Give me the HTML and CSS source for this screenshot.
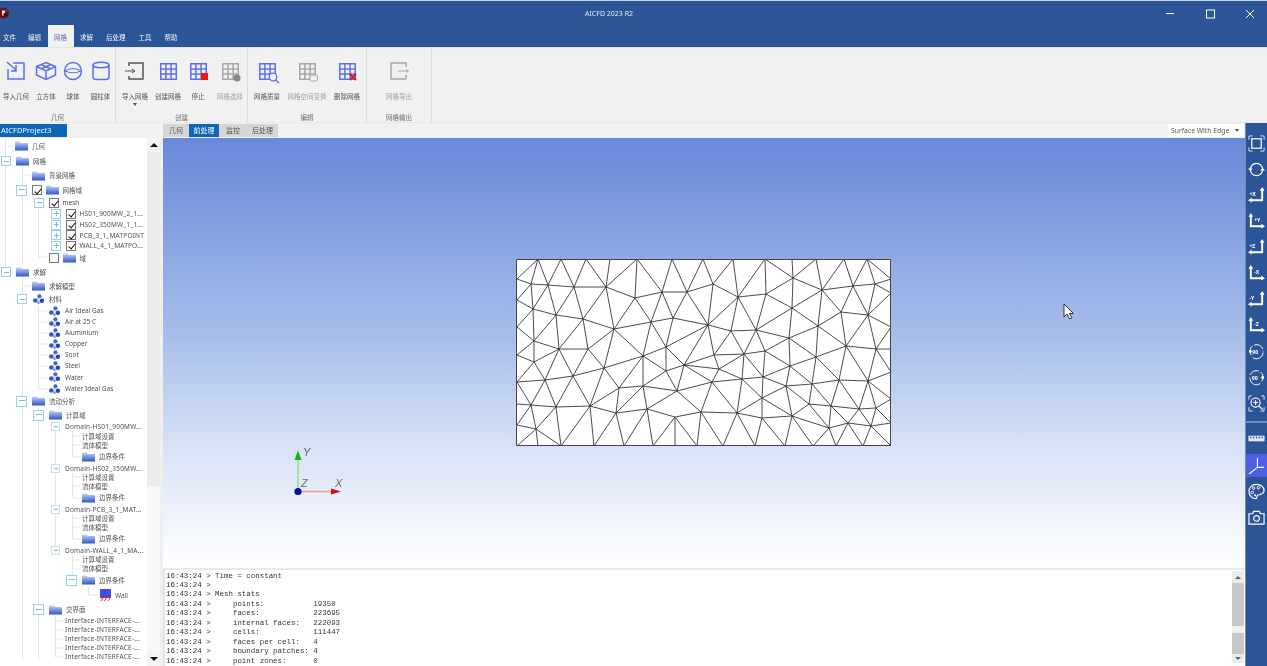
FILE: index.html
```html
<!DOCTYPE html>
<html lang="zh-CN">
<head>
<meta charset="utf-8">
<title>AICFD 2023 R2</title>
<link rel="stylesheet" href="styles.css">
</head>
<body>
<svg class="defs" width="0" height="0" aria-hidden="true">
  <defs>
    <linearGradient id="fg" x1="0" y1="0" x2="0" y2="1">
      <stop offset="0" stop-color="#c9d6f2"/><stop offset=".45" stop-color="#7f9be0"/><stop offset="1" stop-color="#2f56c4"/>
    </linearGradient>
    <symbol id="folder" viewBox="0 0 13 10"><path d="M0 1.5Q0 .5 1 .5H4.500L6 2H12Q13 2 13 3V9.500H0Z" fill="url(#fg)"/></symbol>
    <symbol id="mat" viewBox="0 0 13 11">
      <circle cx="7.500" cy="2.500" r="2.300" fill="#3f63d8"/><circle cx="3" cy="7.200" r="2.500" fill="#3656d0"/><circle cx="10.200" cy="7.500" r="2.500" fill="#2746b8"/><circle cx="6.500" cy="5.500" r="1.400" fill="#c4d0f0"/><circle cx="6.500" cy="9.500" r="1.400" fill="#6f8ae0"/>
    </symbol>
    <symbol id="wall" viewBox="0 0 11 12"><rect width="11" height="8" fill="#3d4fe0"/><rect y="8" width="11" height="1" fill="#e02020"/><path d="M1 12l2-3M4.500 12l2-3M8 12l2-3" stroke="#e02020" fill="none"/></symbol>
    <symbol id="grid" viewBox="0 0 17 17"><path d="M.75.75H16.250V16.250H.75ZM.75 5.900H16.250M.75 11.100H16.250M5.900.75V16.250M11.100.75V16.250" fill="none" stroke="currentColor" stroke-width="1.500"/></symbol>
    <symbol id="axa" viewBox="0 0 18 18"><path d="M15 3V14H3" fill="none" stroke="#fff" stroke-width="2"/><path d="M15 0l2.500 4h-5zM0 14l4-2.500v5z" fill="#fff"/></symbol>
    <symbol id="axb" viewBox="0 0 18 18"><path d="M3 3V14H15" fill="none" stroke="#fff" stroke-width="2"/><path d="M3 0l2.500 4h-5zM18 14l-4-2.500v5z" fill="#fff"/></symbol>
  </defs>
</svg>
<div class="app">
  <header class="titlebar">
    <svg class="logo" viewBox="0 0 10 12"><circle cx="3.500" cy="6" r="5.500" fill="#6a1216"/><path d="M2 3.500h3v2.500H3.500v2.500H2z" fill="#e8e8e8"/><circle cx="6" cy="8" r="1.400" fill="#111"/><circle cx="6.500" cy="3.500" r="1" fill="#d02020"/></svg>
    <div class="title">AICFD 2023 R2</div>
    <div class="winctl">
      <svg viewBox="0 0 40 25"><path d="M16 12.500H24" stroke="#fff" fill="none"/></svg>
      <svg viewBox="0 0 40 25"><rect x="16.500" y="9" width="8" height="8" stroke="#fff" fill="none"/></svg>
      <svg viewBox="0 0 40 25"><path d="M16 9l8 8M24 9l-8 8" stroke="#fff" fill="none"/></svg>
    </div>
  </header>
  <nav class="menubar">
    <span class="menu first">文件</span><span class="menu">编辑</span><span class="menu active">网格</span><span class="menu">求解</span><span class="menu">后处理</span><span class="menu">工具</span><span class="menu">帮助</span>
  </nav>
  <section class="ribbon">
    <div class="group g1">
      <div class="btns">
        <div class="btn w32"><svg class="ri v20 blue" viewBox="0 0 20 20"><path d="M7 2H18V18H2V8" fill="none" stroke="currentColor" stroke-width="1.500"/><path d="M1 1L10 9M10 4V10H5" fill="none" stroke="currentColor" stroke-width="1.500"/></svg><span>导入几何</span></div>
        <div class="btn w28"><svg class="ri v20 big blue" viewBox="0 0 22 20"><path d="M11 1.500L20.500 5.500V14L11 18.500L1.500 14V5.500ZM1.500 5.500L11 10L20.500 5.500M11 10V18.500M6 3.500L16 8M16 3.500L6 8" fill="none" stroke="currentColor" stroke-width="1.500"/></svg><span>立方体</span></div>
        <div class="btn w26"><svg class="ri v20 blue" viewBox="0 0 20 20"><circle cx="10" cy="10" r="8.500" fill="none" stroke="currentColor" stroke-width="1.500"/><path d="M2 10Q10 5 18 10M2 10Q10 13.500 18 10" fill="none" stroke="currentColor"/></svg><span>球体</span></div>
        <div class="btn w29"><svg class="ri v20 blue" viewBox="0 0 20 20"><ellipse cx="10" cy="4" rx="8" ry="2.800" fill="none" stroke="currentColor" stroke-width="1.500"/><path d="M2 4V16Q2 18.500 6 18.500H14Q18 18.500 18 16V4" fill="none" stroke="currentColor" stroke-width="1.500"/></svg><span>圆柱体</span></div>
      </div>
      <div class="glabel">几何</div>
    </div>
    <div class="group g2">
      <div class="btns">
        <div class="btn w38"><svg class="ri v20 dark" viewBox="0 0 20 20"><path d="M4 5V2H18V18H4V15" fill="none" stroke="currentColor" stroke-width="1.500"/><path d="M0 10H9M7 8l3 2-3 2" fill="none" stroke="currentColor"/></svg><span>导入网格</span><i class="caret"></i></div>
        <div class="btn w28"><svg class="ri blue"><use href="#grid"/></svg><span>创建网格</span></div>
        <div class="btn w32"><svg class="ri blue"><use href="#grid"/></svg><b class="stop"></b><span>停止</span></div>
        <div class="btn w32 off"><svg class="ri gv grey" viewBox="0 0 20 20"><use href="#grid" width="17" height="17"/><circle cx="15" cy="15" r="3.500" fill="#888"/></svg><span>网格选择</span></div>
      </div>
      <div class="glabel">创建</div>
    </div>
    <div class="group g3">
      <div class="btns">
        <div class="btn w38"><svg class="ri gv blue" viewBox="0 0 20 20"><use href="#grid" width="17" height="17"/><circle cx="14" cy="14" r="3.800" fill="#f1f1f1" stroke="currentColor" stroke-width="1.300"/><path d="M16.500 16.500L20 20" stroke="currentColor" stroke-width="1.300"/></svg><span>网格质量</span></div>
        <div class="btn w42 off"><svg class="ri gv grey" viewBox="0 0 20 20"><use href="#grid" width="17" height="17"/><rect x="11" y="12" width="7.500" height="6" rx="1.500" fill="#f1f1f1" stroke="currentColor"/></svg><span>网格空间变换</span></div>
        <div class="btn w38"><svg class="ri blue"><use href="#grid"/></svg><svg class="redx" viewBox="0 0 8 8"><path d="M1 1L7 7M7 1L1 7" stroke="#e01515" stroke-width="2"/></svg><span>删除网格</span></div>
      </div>
      <div class="glabel">编辑</div>
    </div>
    <div class="group g4">
      <div class="btns">
        <div class="btn w64 off"><svg class="ri v20 grey" viewBox="0 0 20 20"><path d="M17 6V2H2V18H17V14" fill="none" stroke="currentColor" stroke-width="1.500"/><path d="M9 10H19M17 8.500l2.500 1.500-2.500 1.500" fill="none" stroke="currentColor"/></svg><span>网格导出</span></div>
      </div>
      <div class="glabel">网格输出</div>
    </div>
  </section>
  <main class="workspace">
    <aside class="leftcol">
      <div class="projtab">AICFDProject3</div>
      <div class="treepane">
        <div class="tree">
          <svg class="treelines" viewBox="0 138 147 528"><path d="M5.500 138V272M5.500 146H14M22.500 166V660M22.500 175H31M22.500 286H31M38.500 197V257M38.500 257H48M38.500 305V389M38.500 311H48M38.500 322H48M38.500 333H48M38.500 344H48M38.500 355H48M38.500 366H48M38.500 378H48M38.500 389H48M55.500 208V245M38.500 408V660M55.500 422V550M55.500 621H63M55.500 630H63M55.500 639H63M55.500 648H63M55.500 657H63M55.500 616V657M72.500 431V457M72.500 436H80M72.500 445H80M72.500 457H81M72.500 473V498M72.500 477H80M72.500 486H80M72.500 498H81M72.500 514V539M72.500 518H80M72.500 527H80M72.500 539H81M72.500 555V580M72.500 560H80M72.500 569H80M88.500 587V595H98" fill="none" stroke="#e6e6e6"/></svg>
          <div class="row h16 p15"><svg class="fd"><use href="#folder"/></svg><span>几何</span></div>
          <div class="row h14 p1"><i class="ex"></i><svg class="fd"><use href="#folder"/></svg><span>网格</span></div>
          <div class="row h15 p32"><svg class="fd"><use href="#folder"/></svg><span>背景网格</span></div>
          <div class="row h14 p16"><i class="ex lg"></i><i class="cb on"></i><svg class="fd"><use href="#folder"/></svg><span>网格域</span></div>
          <div class="row h11 p34"><i class="ex"></i><i class="cb on"></i><span>mesh</span></div>
          <div class="row h11 p51"><i class="ex plus"></i><i class="cb on"></i><span>HS01_900MW_2_1...</span></div>
          <div class="row h11 p51"><i class="ex plus"></i><i class="cb on"></i><span>HS02_350MW_1_1...</span></div>
          <div class="row h10 p51"><i class="ex plus"></i><i class="cb on"></i><span>PCB_3_1_MATPOINT</span></div>
          <div class="row h11 p51"><i class="ex plus"></i><i class="cb on"></i><span>WALL_4_1_MATPO...</span></div>
          <div class="row h14 p49"><i class="cb"></i><svg class="fd"><use href="#folder"/></svg><span>域</span></div>
          <div class="row h14 p1"><i class="ex"></i><svg class="fd"><use href="#folder"/></svg><span>求解</span></div>
          <div class="row h14 p32"><svg class="fd"><use href="#folder"/></svg><span>求解模型</span></div>
          <div class="row h12 p17"><i class="ex"></i><svg class="fd"><use href="#mat"/></svg><span>材料</span></div>
          <div class="row h11 p48"><svg class="fd"><use href="#mat"/></svg><span>Air Ideal Gas</span></div>
          <div class="row h11 p48"><svg class="fd"><use href="#mat"/></svg><span>Air at 25 C</span></div>
          <div class="row h11 p48"><svg class="fd"><use href="#mat"/></svg><span>Aluminium</span></div>
          <div class="row h11 p48"><svg class="fd"><use href="#mat"/></svg><span>Copper</span></div>
          <div class="row h11 p48"><svg class="fd"><use href="#mat"/></svg><span>Soot</span></div>
          <div class="row h11 p48"><svg class="fd"><use href="#mat"/></svg><span>Steel</span></div>
          <div class="row h12 p48"><svg class="fd"><use href="#mat"/></svg><span>Water</span></div>
          <div class="row h11 p48"><svg class="fd"><use href="#mat"/></svg><span>Water Ideal Gas</span></div>
          <div class="row h14 p16"><i class="ex lg"></i><svg class="fd"><use href="#folder"/></svg><span>流动分析</span></div>
          <div class="row h14 p33"><i class="ex lg"></i><svg class="fd"><use href="#folder"/></svg><span>计算域</span></div>
          <div class="row h9 p51"><i class="ex sm"></i><span>Domain-HS01_900MW...</span></div>
          <div class="row h10 p82"><span>计算域设置</span></div>
          <div class="row h9 p82"><span>流体模型</span></div>
          <div class="row h13 p82"><svg class="fd"><use href="#folder"/></svg><span>边界条件</span></div>
          <div class="row h10 p51"><i class="ex sm"></i><span>Domain-HS02_350MW...</span></div>
          <div class="row h9 p82"><span>计算域设置</span></div>
          <div class="row h9 p82"><span>流体模型</span></div>
          <div class="row h13 p82"><svg class="fd"><use href="#folder"/></svg><span>边界条件</span></div>
          <div class="row h10 p51"><i class="ex sm"></i><span>Domain-PCB_3_1_MAT...</span></div>
          <div class="row h9 p82"><span>计算域设置</span></div>
          <div class="row h9 p82"><span>流体模型</span></div>
          <div class="row h13 p82"><svg class="fd"><use href="#folder"/></svg><span>边界条件</span></div>
          <div class="row h10 p51"><i class="ex sm"></i><span>Domain-WALL_4_1_MA...</span></div>
          <div class="row h9 p82"><span>计算域设置</span></div>
          <div class="row h9 p82"><span>流体模型</span></div>
          <div class="row h14 p66"><i class="ex lg"></i><svg class="fd"><use href="#folder"/></svg><span>边界条件</span></div>
          <div class="row h16 p100"><svg class="wl"><use href="#wall"/></svg><span>Wall</span></div>
          <div class="row h13 p33"><i class="ex lg"></i><svg class="fd"><use href="#folder"/></svg><span>交界面</span></div>
          <div class="row h9 p65"><span>Interface-INTERFACE-...</span></div>
          <div class="row h9 p65"><span>Interface-INTERFACE-...</span></div>
          <div class="row h9 p65"><span>Interface-INTERFACE-...</span></div>
          <div class="row h9 p65"><span>Interface-INTERFACE-...</span></div>
          <div class="row h9 p65"><span>Interface-INTERFACE-...</span></div>
        </div>
        <div class="tscroll">
          <div class="tbtn"><i class="up"></i></div>
          <div class="tthumb"></div>
          <div class="ttrack"></div>
          <div class="tbtn"><i class="down"></i></div>
        </div>
      </div>
    </aside>
    <div class="centercol">
      <div class="tabrow">
        <span class="tab t26">几何</span><span class="tab t30 sel">前处理</span><span class="tab t28">监控</span><span class="tab t31">后处理</span>
        <div class="combo"><span>Surface With Edge</span><i class="cdown"></i></div>
      </div>
      <div class="viewport">
        <svg class="mesh" viewBox="516 259 375 187" width="375" height="187">
          <rect x="516" y="259" width="375" height="187" fill="#fff"/>
          <path class="edges" d="M517 279L531 284L548 285L574 287L606 287L635 298L662 292L687 292L713 284L738 297L766 294L792 308L822 290L853 286L875 284L891 279
          M517 279L538 259L531 284M538 259L548 285L561 259L574 287L586 259L606 287L610 259M606 287L637 259L635 298M637 259L662 292L672 259L687 292L703 259L713 284L733 259L738 297L765 259L766 294M765 259L793 278L792 259M793 278L792 308M793 278L816 259L822 290L844 259L853 286L867 259L875 284M867 259L891 279M793 278L822 290M766 294L793 278
          M517 300L533 309L556 315L583 319L614 329L651 322L673 318L708 325L731 331L756 330L789 338L818 326L841 312L868 315L891 327
          M517 300L531 284L533 309L548 285L556 315L574 287L583 319L606 287L614 329L635 298L651 322L662 292L673 318L687 292L708 325L713 284M708 325L738 297L731 331M738 297L756 330L766 294M756 330L792 308L789 338M792 308L818 326L822 290L841 312L853 286L868 315L875 284L891 293L868 315
          M517 327L533 309L534 341L556 315L559 349L583 319L588 349L614 329L604 368M614 329L643 356L651 322L666 347L673 318M517 327L534 341M517 355L534 341L534 362L517 355M534 341L559 349L534 362L517 382L545 380L534 362M545 380L559 349L573 376L545 380M559 349L588 349L573 376L604 368L588 349M604 368L643 356L666 347L708 325M643 356L666 371L666 347L684 365L708 325L714 355L731 331L744 354L756 330L765 351L789 338L790 366L816 357L818 326M789 338L816 357L846 346L818 326M846 346L841 312M846 346L868 315L876 349L846 346M876 349L891 327M876 349L891 349M846 346L839 380L816 357M846 346L868 381L876 349L891 372L868 381L839 380L812 384L786 386L763 377L790 366L765 351L744 354L714 355L684 365L666 371L677 391L684 365M714 355L719 369L684 365M719 369L744 354L742 379L719 369L712 382L742 379L763 377L744 354M763 377L765 351M790 366L786 386M816 357L812 384M684 365L712 382L677 391M790 366L812 384
          M517 382L531 405L545 380L556 407L573 376L590 406L604 368L619 388L590 406L556 407L536 429L531 405L517 404M531 405L517 425L536 429M517 446L536 429L538 446M536 429L561 446L556 407M561 446L590 406L594 446L616 413L590 406M643 356L643 386L619 388L616 413L643 386L647 409L616 413L624 446L647 409L653 446L675 417L647 409L677 391L643 386M675 417L675 446M675 417L701 412L677 391M701 412L697 446M701 412L723 446L737 413L712 382L701 412M701 412L737 413L755 446L762 418L737 413L762 398L762 418L792 416L762 398L786 386L809 404L812 384M809 404L792 416L785 446M792 416L813 446M792 416L829 428L809 404L831 406L829 428L848 423L831 406L839 380M831 406L859 409L848 423L871 426L859 409L868 381M859 409L876 408L868 381L891 399L876 408L871 426L891 423L876 408M829 428L813 446M829 428L836 446L848 423L863 446L871 426L891 446M762 398L763 377M762 398L742 379L737 413
          M531 405L556 407M619 388L643 356M643 386L666 371M786 386L792 416M812 384L831 406M839 380L859 409M762 418L785 446M675 417L697 446"/>
          <rect class="edges" x="516.500" y="259.500" width="374" height="186"/>
        </svg>
        <svg class="axes" viewBox="0 0 60 60">
          <path d="M8 45.500V12" stroke="#8fe08f" stroke-width="1.500"/><path d="M8 4.500L11.500 14H4.500Z" fill="#12b512"/>
          <path d="M8 45.500H42" stroke="#f2a0a0" stroke-width="1.500"/><path d="M51 45.500L41 42.500V48.500Z" fill="#d00f0f"/>
          <circle cx="8" cy="45.500" r="3.600" fill="#0a0a9c"/>
          <text x="13" y="10" class="axlabel">Y</text><text x="11" y="41" class="axlabel">Z</text><text x="45" y="41" class="axlabel">X</text>
        </svg>
        <svg class="cursor" viewBox="0 0 11 17"><path d="M1 1V14L4 11L6.500 16L9 15L6.500 10.500H10.500Z" fill="#fff" stroke="#333"/></svg>
      </div>
      <div class="console">
        <pre class="log">16:43:24 &gt; Time = constant
16:43:24 &gt; 
16:43:24 &gt; Mesh stats
16:43:24 &gt;     points:           19350
16:43:24 &gt;     faces:            223695
16:43:24 &gt;     internal faces:   222093
16:43:24 &gt;     cells:            111447
16:43:24 &gt;     faces per cell:   4
16:43:24 &gt;     boundary patches: 4
16:43:24 &gt;     point zones:      0</pre>
        <div class="cscroll">
          <div class="cbtn"><i class="up sm"></i></div>
          <div class="ctrack"><div class="cthumb"></div></div>
          <div class="cbtn low"><i class="down sm"></i></div>
        </div>
      </div>
    </div>
    <aside class="toolbar">
      <div class="tool"><svg viewBox="0 0 18 18"><rect x="4" y="4" width="10" height="10" fill="none" stroke="#fff" stroke-width="1.300"/><path d="M1 5V1H5M13 1H17V5M17 13V17H13M5 17H1V13" fill="none" stroke="#dfe6f5"/></svg></div>
      <div class="tool"><svg viewBox="0 0 18 18"><circle cx="9" cy="9" r="6.500" fill="none" stroke="#fff" stroke-width="1.300"/><path d="M0 8l2.500 2.500L5 8zM18 10l-2.500-2.500L13 10z" fill="#fff"/></svg></div>
      <div class="tool"><svg viewBox="0 0 18 18"><use href="#axa"/><text x="1.500" y="9.500" class="tl">+X</text></svg></div>
      <div class="tool"><svg viewBox="0 0 18 18"><use href="#axb"/><text x="6.500" y="9.500" class="tl">+Y</text></svg></div>
      <div class="tool"><svg viewBox="0 0 18 18"><use href="#axa"/><text x="1.500" y="9.500" class="tl">+Z</text></svg></div>
      <div class="tool"><svg viewBox="0 0 18 18"><use href="#axb"/><text x="6.500" y="9.500" class="tl">-X</text></svg></div>
      <div class="tool"><svg viewBox="0 0 18 18"><use href="#axa"/><text x="1.500" y="9.500" class="tl">-Y</text></svg></div>
      <div class="tool"><svg viewBox="0 0 18 18"><use href="#axb"/><text x="6.500" y="9.500" class="tl">-Z</text></svg></div>
      <div class="tool"><svg viewBox="0 0 18 18"><path d="M3.500 13A7 7 0 1 1 16 9" fill="none" stroke="#fff" stroke-dasharray="11 2"/><path d="M5 15.500A7 7 0 0 0 16 10" fill="none" stroke="#fff"/><circle cx="2.500" cy="9" r="1.500" fill="#fff"/><text x="4.500" y="11.500" class="tl">90</text></svg></div>
      <div class="tool"><svg viewBox="0 0 18 18"><path d="M14.500 13A7 7 0 1 0 2 9" fill="none" stroke="#fff" stroke-dasharray="11 2"/><path d="M13 15.500A7 7 0 0 1 2 10" fill="none" stroke="#fff"/><circle cx="15.500" cy="9" r="1.500" fill="#fff"/><text x="4" y="11.500" class="tl">90</text></svg></div>
      <div class="tool"><svg viewBox="0 0 18 18"><path d="M1 5V1H4M14 1H17V5M17 13V17H13M5 17H1V13" fill="none" stroke="#dfe6f5"/><circle cx="8" cy="8" r="4.800" fill="none" stroke="#fff" stroke-width="1.200"/><path d="M8 5.500V10.500M5.500 8H10.500M11.500 11.500L15.500 15.500" stroke="#fff" stroke-width="1.200"/></svg></div>
      <div class="toolsep"></div>
      <div class="tool"><svg viewBox="0 0 18 18"><rect x=".5" y="6" width="17" height="6" fill="#dfe6f5"/><path d="M3 9V7M6 9V7M9 9V7M12 9V7M15 9V7" stroke="#2b5597" stroke-width="1.200"/></svg></div>
      <div class="tool active"><svg viewBox="0 0 18 18"><path d="M10 1V11M10 11L17 11M10 11L1 18" fill="none" stroke="#fff" stroke-width="1.200"/></svg></div>
      <div class="tool"><svg viewBox="0 0 18 18"><path d="M9 1.500C4 1.500 1 5 1 9C1 14 5 16.500 8 16.500C10 16.500 9 14 10 13C11 12 17 13 17 8C17 4 13 1.500 9 1.500Z" fill="none" stroke="#fff" stroke-width="1.200"/><circle cx="6" cy="5.500" r="1.300" fill="none" stroke="#fff"/><circle cx="11" cy="5" r="1.300" fill="none" stroke="#fff"/><circle cx="4.500" cy="10" r="1.300" fill="none" stroke="#fff"/><circle cx="7.500" cy="13" r="1.200" fill="#fff"/></svg></div>
      <div class="tool"><svg viewBox="0 0 18 18"><path d="M1 5H5L6 2.500H12L13 5H17V16H1Z" fill="none" stroke="#fff" stroke-width="1.200"/><circle cx="9" cy="10" r="3" fill="none" stroke="#fff" stroke-width="1.200"/></svg></div>
    </aside>
  </main>
</div>
</body>
</html>
```
FILE: styles.css
```css
* { box-sizing: border-box; }
html, body { margin: 0; height: 100%; overflow: hidden; background: #f1f1f1; }
body { font-family: "Noto Sans CJK SC", "Noto Sans", sans-serif; color: #4a4a4a; }
.defs { position: absolute; }
.app { display: flex; flex-direction: column; width: 1267px; height: 666px; overflow: hidden; filter: blur(.3px); }

.titlebar { display: flex; align-items: center; height: 25px; flex: none; background: #2b5597; border-top: 1px solid #c8d2e2; color: #fff; }
.logo { width: 10px; height: 12px; flex: none; }
.title { flex: 1; padding-left: 58px; text-align: center; font: 7px "Noto Sans", sans-serif; color: #e8edf6; }
.winctl { display: flex; flex: none; width: 117px; }
.winctl svg { width: 40px; height: 25px; flex: none; }

.menubar { display: flex; height: 22px; flex: none; background: #2b5597; }
.menu { padding: 2px 6.5px 0; line-height: 20px; font-size: 6.5px; color: #eef2f9; }
.menu.first { padding-left: 3px; padding-right: 5.5px; }
.menu.active { background: #f1f1f1; color: #5b73b5; }

.ribbon { display: flex; height: 76px; flex: none; background: #f1f1f1; border-top: 1px solid #e6e6e6; border-bottom: 1px solid #e8e8e8; }
.group { display: flex; flex-direction: column; border-right: 1px solid #dcdcdc; }
.g1 { width: 116px; } .g2 { width: 132px; } .g3 { width: 119px; } .g4 { width: 65px; }
.btns { display: flex; height: 65px; }
.btn { position: relative; display: flex; flex-direction: column; align-items: center; flex: none; padding-top: 15px; font-size: 6.5px; line-height: 10px; white-space: nowrap; color: #555; }
.btn span { margin-top: 11px; }
.off { color: #a3a3a3; }
.w26 { width: 26px; } .w28 { width: 28px; } .w29 { width: 29px; } .w32 { width: 32px; } .w38 { width: 38px; } .w42 { width: 42px; } .w64 { width: 64px; }
.ri { width: 17px; height: 17px; flex: none; overflow: visible; }
.v20 { width: 20px; height: 20px; margin: -2px 0 -1px; }
.v20.big { width: 22px; }
.gv { width: 20px; height: 20px; margin: 0 0 -3px 3px; }
.blue { color: #5c70e8; }
.dark { color: #555; }
.grey { color: #a8a8a8; }
.stop { position: absolute; left: 19px; top: 25px; width: 7px; height: 7px; background: #e81a1a; }
.redx { position: absolute; left: 21px; top: 25px; width: 8px; height: 8px; }
.caret { width: 0; height: 0; margin-top: 2px; border: 2.500px solid transparent; border-top: 3px solid #555; border-bottom: 0; }
.glabel { text-align: center; font-size: 6.5px; line-height: 10px; color: #707070; }

.workspace { display: flex; flex: 1; min-height: 0; }
.leftcol { display: flex; flex-direction: column; flex: none; width: 163px; }
.projtab { flex: none; width: 67px; height: 13px; margin-top: 1px; background: #0d66b5; color: #fff; padding-left: 1px; font: 7.5px/12px "Noto Sans", sans-serif; }
.treepane { display: flex; flex: 1; min-height: 0; margin-top: 1px; background: #fff; border-right: 3px solid #efefef; }
.tree { position: relative; flex: none; width: 147px; overflow: hidden; font-family: "Noto Sans", "Noto Sans CJK SC", sans-serif; }
.treelines { position: absolute; left: 0; top: 0; width: 147px; height: 528px; }
.row { position: relative; display: flex; align-items: center; font-size: 6.5px; white-space: nowrap; color: #505050; }
.row span { line-height: 9px; }
.p51 span, .p65 span { letter-spacing: .2px; }
.h9 { height: 9px; } .h10 { height: 10px; } .h11 { height: 11px; } .h12 { height: 12px; } .h13 { height: 13px; } .h14 { height: 14px; } .h15 { height: 15px; } .h16 { height: 16px; }
.p1 { padding-left: 1px; } .p15 { padding-left: 15px; } .p16 { padding-left: 16px; } .p17 { padding-left: 17px; } .p32 { padding-left: 32px; } .p33 { padding-left: 33px; } .p34 { padding-left: 34px; } .p48 { padding-left: 48px; } .p49 { padding-left: 49px; } .p51 { padding-left: 51px; } .p65 { padding-left: 65px; } .p66 { padding-left: 66px; } .p82 { padding-left: 82px; } .p100 { padding-left: 100px; }
.fd { width: 13px; height: 10px; flex: none; margin-right: 4px; }
.wl { width: 11px; height: 12px; flex: none; margin-right: 4px; }
.ex { position: relative; flex: none; width: 10px; height: 10px; margin-right: 5px; background: #fff; border: 1px solid #93d2ee; }
.ex::before { content: ""; position: absolute; left: 1.500px; right: 1.500px; top: 3.500px; height: 1px; background: #7db8dc; }
.ex.lg { width: 11px; height: 11px; border-width: 1.500px; }
.ex.lg::before { top: 3.500px; }
.ex.sm { width: 9px; height: 9px; border-color: #bfe3f5; }
.ex.sm::before { top: 3px; }
.ex.plus::after { content: ""; position: absolute; top: 1.500px; bottom: 1.500px; left: 3.500px; width: 1px; background: #7db8dc; }
.cb { position: relative; flex: none; width: 10px; height: 10px; margin-right: 3.500px; background: #fff; border: 1px solid #777; }
.cb.on::after { content: ""; position: absolute; left: 2.500px; top: .5px; width: 3px; height: 6px; border: solid #111; border-width: 0 1.300px 1.300px 0; transform: rotate(40deg); }
.tscroll { display: flex; flex-direction: column; flex: none; width: 13px; background: #f8f8f8; }
.tbtn { display: flex; align-items: center; justify-content: center; flex: none; height: 14px; background: #f4f4f4; }
.tthumb { flex: none; height: 334px; background: #ececec; }
.ttrack { flex: 1; }
.up { width: 0; height: 0; border: 4px solid transparent; border-bottom: 4px solid #111; border-top: 0; }
.down { width: 0; height: 0; border: 4px solid transparent; border-top: 4px solid #111; border-bottom: 0; }
.up.sm, .down.sm { border-width: 3px; border-color: transparent; }
.up.sm { border-bottom-color: #666; border-top-width: 0; }
.down.sm { border-top-color: #666; border-bottom-width: 0; }

.centercol { display: flex; flex-direction: column; flex: 1; min-width: 0; }
.tabrow { display: flex; flex: none; height: 15px; padding: 1px 0; }
.tab { flex: none; height: 13px; background: #d6d6d6; text-align: center; font-size: 7px; line-height: 13px; color: #555; }
.t26 { width: 26px; } .t30 { width: 30px; } .t28 { width: 28px; } .t31 { width: 31px; }
.tab.sel { background: #0d66b5; color: #fff; }
.combo { display: flex; align-items: center; justify-content: space-between; flex: none; width: 76px; height: 13px; margin-left: auto; margin-right: 1px; padding: 0 5px 0 3px; background: #fff; font: 6.8px "Noto Sans", sans-serif; color: #555; white-space: nowrap; }
.cdown { width: 0; height: 0; border: 2.500px solid transparent; border-top: 3px solid #555; border-bottom: 0; }
.viewport { position: relative; flex: 1; min-height: 0; background: linear-gradient(#6888d9 0%, #a9bfea 47%, #d8e2f6 72%, #fff 100%); }
.mesh { position: absolute; left: 353px; top: 121px; }
.edges { fill: none; stroke: #2a2a2a; stroke-width: .85; stroke-linejoin: round; }
rect.edges { stroke: #444; stroke-width: 1; }
.axes { position: absolute; left: 127px; top: 308px; width: 60px; height: 60px; }
.axlabel { font: italic 11px "Liberation Sans", sans-serif; fill: #666; }
.cursor { position: absolute; left: 900px; top: 165px; width: 11px; height: 17px; }

.console { display: flex; flex: none; height: 98px; background: #fff; border-top: 2px solid #e9e9e9; border-left: 2px solid #e4e4e4; }
.log { flex: 1; margin: 0; padding: 1.500px 0 0 1px; overflow: hidden; font: 7.45px/9.45px "Liberation Mono", monospace; color: #333; white-space: pre; }
.cscroll { display: flex; flex-direction: column; flex: none; width: 12px; height: 92px; margin: 1px 1px 0 0; }
.cbtn { display: flex; align-items: center; justify-content: center; flex: none; height: 12px; background: #ececec; }
.cbtn.low { height: 9px; }
.ctrack { flex: 1; padding-top: 43px; background: #c8c8c8; }
.cthumb { height: 7px; background: #f0f0f0; }

.toolbar { display: flex; flex-direction: column; flex: none; width: 22px; padding-top: 7px; background: #2b5597; border-left: 1px solid #6f8bb8; }
.tool { display: flex; align-items: center; justify-content: center; flex: none; height: 26.1px; }
.tool svg { width: 17px; height: 17px; }
.tool.active { height: 23px; margin: 1.500px 0; background: #4f5fe4; }
.toolsep { flex: none; height: 1.500px; margin: 4.400px 0 3px; background: #6f8bb8; }
.tl { font: bold 5.500px "Noto Sans", sans-serif; fill: #fff; }
```
